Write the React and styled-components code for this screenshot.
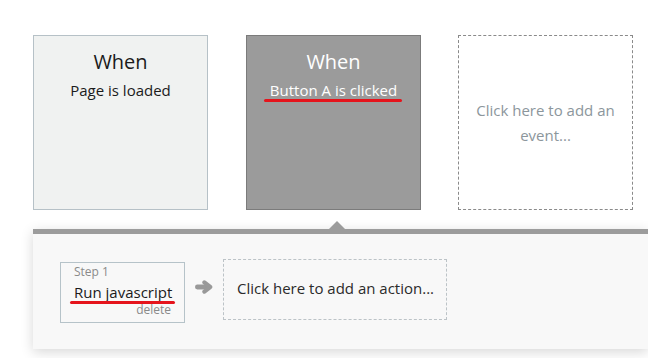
import React from "react";
import styled, { createGlobalStyle } from "styled-components";

const Global = createGlobalStyle`
  html, body { margin: 0; padding: 0; background: #fff; overflow: hidden; }
  body { font-family: "Open Sans", "Liberation Sans", sans-serif; }
`;

const Page = styled.div`
  width: 648px;
  height: 358px;
  padding-top: 35px;
  box-sizing: border-box;
`;

const CardRow = styled.div`
  display: flex;
  gap: 38px;
  padding-left: 33px;
`;

const Card = styled.div`
  box-sizing: border-box;
  width: 175px;
  height: 175px;
  padding-top: 12px;
  text-align: center;
  background: ${(p) => (p.$active ? "#9b9b9b" : "#f0f2f1")};
  border: 1px solid ${(p) => (p.$active ? "#7b7b7b" : "#b6c1c7")};
  color: ${(p) => (p.$active ? "#ffffff" : "#1b1b1b")};
`;

const AddCard = styled.div`
  box-sizing: border-box;
  width: 175px;
  height: 175px;
  margin-left: -1px;
  display: flex;
  align-items: center;
  justify-content: center;
  text-align: center;
  padding: 0 14px;
  border: 1px dashed #8a8a8a;
  background: #fff;
  color: #8c969c;
  font-size: 15px;
  line-height: 25px;
`;

const When = styled.div`
  font-size: 20px;
  line-height: 27px;
`;

const Trigger = styled.div`
  font-size: 15px;
  line-height: 20px;
  margin-top: 5px;
`;

const Marked = styled.span`
  position: relative;
  white-space: nowrap;
  &::after {
    content: "";
    position: absolute;
    left: ${(p) => p.$l}px;
    right: ${(p) => p.$r}px;
    top: 19px;
    height: 3px;
    border-radius: 2px;
    background: #e5141c;
  }
`;

const Panel = styled.div`
  position: relative;
  margin: 19px 0 0 33px;
  border-top: 5px solid #9c9c9c;
  background: #f8f8f8;
  height: 115px;
  box-shadow: 0 3px 12px rgba(0, 0, 0, 0.16);
`;

const Pointer = styled.div`
  position: absolute;
  left: 296px;
  top: -13px;
  width: 0;
  height: 0;
  border-left: 8px solid transparent;
  border-right: 8px solid transparent;
  border-bottom: 8px solid #9c9c9c;
`;

const ActionRow = styled.div`
  display: flex;
  align-items: flex-start;
  padding: 25px 0 0 27px;
`;

const StepBox = styled.div`
  box-sizing: border-box;
  width: 125px;
  height: 61px;
  margin-top: 3px;
  padding: 1px 13px 5px;
  border: 1px solid #b6c3c9;
  background: #f8f8f8;
  display: flex;
  flex-direction: column;
  white-space: nowrap;
`;

const StepLabel = styled.div`
  font-size: 12px;
  line-height: 16px;
  color: #8a8a8a;
`;

const StepName = styled.div`
  font-size: 15px;
  line-height: 20px;
  margin-top: 2px;
  color: #1b1b1b;
`;

const Delete = styled.div`
  font-size: 12px;
  line-height: 16px;
  color: #8a8a8a;
  text-align: right;
`;

const ArrowWrap = styled.div`
  width: 18px;
  height: 14px;
  margin: 21px 10px 0 10px;
  display: flex;
`;

const AddAction = styled.div`
  box-sizing: border-box;
  width: 224px;
  height: 61px;
  display: flex;
  align-items: center;
  padding: 0 0 3px 13px;
  border: 1px dashed #bcc3c7;
  font-size: 15px;
  color: #2b2b2b;
`;

const Arrow = () => (
  <svg width="18" height="14" viewBox="0 0 18 14">
    <path d="M2.4 7 H13.5" stroke="#999999" strokeWidth="4.8" strokeLinecap="round" fill="none" />
    <path
      d="M9.4 2.4 L15.2 7 L9.4 11.6"
      stroke="#999999"
      strokeWidth="4.2"
      strokeLinecap="round"
      strokeLinejoin="round"
      fill="none"
    />
  </svg>
);

export default function App() {
  return (
    <>
      <Global />
      <Page>
        <CardRow>
          <Card>
            <When>When</When>
            <Trigger>Page is loaded</Trigger>
          </Card>
          <Card $active>
            <When>When</When>
            <Trigger>
              <Marked $l={-6} $r={-5}>Button A is clicked</Marked>
            </Trigger>
          </Card>
          <AddCard>Click here to add an event...</AddCard>
        </CardRow>
        <Panel>
          <Pointer />
          <ActionRow>
            <StepBox>
              <StepLabel>Step 1</StepLabel>
              <StepName>
                <Marked $l={-4} $r={-3}>Run javascript</Marked>
              </StepName>
              <Delete>delete</Delete>
            </StepBox>
            <ArrowWrap>
              <Arrow />
            </ArrowWrap>
            <AddAction>Click here to add an action...</AddAction>
          </ActionRow>
        </Panel>
      </Page>
    </>
  );
}
